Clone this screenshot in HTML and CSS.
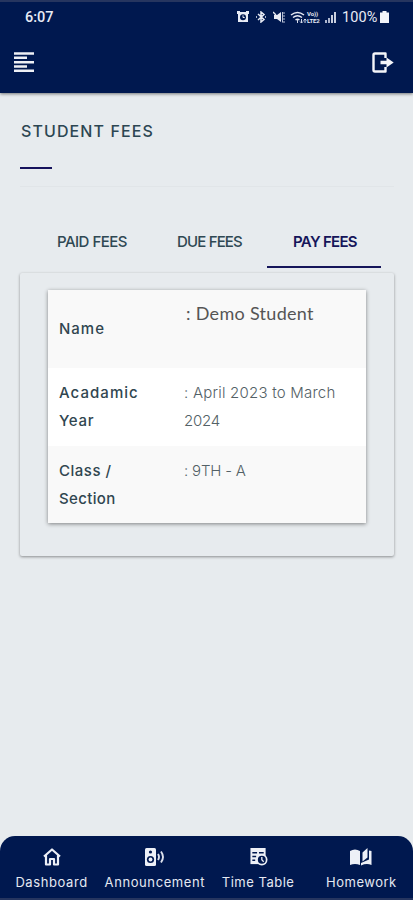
FILE: index.html
```html
<!DOCTYPE html>
<html lang="en">
<head>
<meta charset="utf-8">
<meta name="viewport" content="width=device-width, initial-scale=1">
<title>Student Fees</title>
<link rel="stylesheet" href="styles.css">
</head>
<body>
<div class="app">
  <header class="top">
    <div class="status">
      <span class="clock">6:07</span>
      <div class="indicators">
        <svg width="12" height="12" viewBox="0 0 12 12"><path fill="#e8ebf5" d="M1 1h10v10H1z"/><path fill="#e8ebf5" d="M0 0h3v3H0zM9 0h3v3H9z"/><circle cx="6" cy="6.2" r="3" fill="#00184f"/><path d="M6 4.3v2.2h1.7" stroke="#e8ebf5" fill="none"/></svg>
        <svg class="bt" width="12" height="12" viewBox="0 0 12 12"><path d="M3 3l6 5.5L6 11V1l3 2.5L3 9M1 6h1M10 6h1" stroke="#e8ebf5" stroke-width="1.5" fill="none"/></svg>
        <svg class="mute" width="12" height="12" viewBox="0 0 12 12"><path d="M1 4h3l4-3v10L4 8H1z" fill="#e8ebf5"/><path d="M0 1l3 3" stroke="#e8ebf5" stroke-width="1.500"/><path d="M9.500 1v10" stroke="#b8c0d5"/><path d="M9 2h3M9 5h3M9 8h3M9 11h3" stroke="#b8c0d5"/></svg>
        <svg class="wifi" width="17" height="13" viewBox="0 0 17 13"><path d="M1 4q6.500-5 13 0M3 6.500q4.500-3.500 9 0M5.500 9q2-1.600 4 0" stroke="#e8ebf5" stroke-width="1.500" fill="none"/><path d="M7.500 9v3M11.500 8v4M10 10.500l1.500 1.500 1.500-1.500M15 12V8M13.500 9.500L15 8l1.500 1.500" stroke="#d5daea" fill="none"/></svg>
        <span class="lte"><span>Vo))</span><span>LTE2</span></span>
        <svg class="signal" width="11" height="11" viewBox="0 0 11 11"><path d="M0 8h2v3H0zM3 6h2v5H3z" fill="#aeb7cf"/><path d="M6 3h2v8H6zM9 0h2v11H9z" fill="#c9cfdf"/></svg>
        <span class="percent">100%</span>
        <svg class="battery" width="9" height="12" viewBox="0 0 9 12"><path d="M2.500 0h4v1.500H9V12H0V1.500h2.500z" fill="#f2f4fa"/></svg>
      </div>
    </div>
    <div class="toolbar">
      <svg width="20" height="21" viewBox="0 0 20 21"><path d="M0 1.500h20M0 5.800h13M0 10.200h20M0 14.500h13M0 18.800h20" stroke="#eef0f5" stroke-width="2.600"/></svg>
      <svg width="22" height="21" viewBox="0 0 22 21"><path d="M13.500 6V1.500H3Q1.500 1.500 1.500 3v15q0 1.500 1.500 1.500h10.500V15" stroke="#f4f5f9" stroke-width="2.400" fill="none" stroke-linejoin="round"/><path d="M8.500 8.700h6V5.500l7.200 5-7.200 5v-3.200h-6z" fill="#f4f5f9"/></svg>
    </div>
  </header>

  <main class="content">
    <h1 class="title"><span class="t-title">STUDENT FEES</span></h1>
    <div class="tabs">
      <div class="tab"><span class="t-paid">PAID FEES</span></div>
      <div class="tab due"><span class="t-due">DUE FEES</span></div>
      <div class="tab active"><span class="t-pay">PAY FEES</span></div>
    </div>
    <section class="panel">
      <div class="details">
        <div class="row first"><div class="label"><span class="t-name">Name</span></div><div class="value student"><span>: Demo Student</span></div></div>
        <div class="row white"><div class="label"><span class="t-acad">Acadamic</span><br><span class="t-year">Year</span></div><div class="value"><span class="t-april">: April 2023 to March</span><br><span class="t-2024">2024</span></div></div>
        <div class="row"><div class="label"><span class="t-class">Class /</span><br><span class="t-section">Section</span></div><div class="value"><span class="t-9th">: 9TH - A</span></div></div>
      </div>
    </section>
  </main>

  <nav class="bottom">
    <a class="item"><svg width="18" height="18" viewBox="0 0 18 18"><path d="M1 8.500L9 1.500l8 7M3 7.500V16.500h4V11h4v5.500h4V7.500" fill="none" stroke="#edf0f7" stroke-width="2.200" stroke-linejoin="round"/></svg><span class="n-dash">Dashboard</span></a>
    <a class="item"><svg width="21" height="18" viewBox="0 0 21 18"><rect x="1" y="0" width="11" height="18" rx="1.500" fill="#edf0f7"/><circle cx="6.500" cy="4" r="1.600" fill="#00184f"/><circle cx="6.500" cy="11.500" r="3.600" fill="#00184f"/><circle cx="6.500" cy="11.500" r="1.900" fill="#edf0f7"/><path d="M14 6q2 3 0 6M17 3.500q4 5.500 0 11" fill="none" stroke="#dce1ed" stroke-width="1.900"/></svg><span class="n-ann">Announcement</span></a>
    <a class="item"><svg width="19" height="19" viewBox="0 0 19 19"><path d="M1 0h16v17H1z" fill="#edf0f7"/><path d="M3 5h5M10 5h5M3 9h4M3 13h3" stroke="#00184f" stroke-width="1.600"/><circle cx="13" cy="12.500" r="6" fill="#edf0f7"/><circle cx="13" cy="12.500" r="4.200" fill="#00184f"/><path d="M13 9.500v3l2 2" fill="none" stroke="#edf0f7" stroke-width="1.400"/></svg><span class="n-time">Time Table</span></a>
    <a class="item"><svg width="22" height="18" viewBox="0 0 22 18"><path d="M0 3q5-3 10 0v14q-5-2-10 0zM12.500 4.500L17.500 0v9.500l-5 4zM19 2.500l2.500.5v14q-5-2-10.500.5V15l8-3.500z" fill="#edf0f7"/></svg><span class="n-home">Homework</span></a>
  </nav>
</div>
</body>
</html>
```
FILE: styles.css
```css
* { box-sizing: border-box; }
body { margin: 0; background: #e7ebee; font-family: Inter, "Noto Sans", sans-serif; }
.app { height: 900px; display: flex; flex-direction: column; overflow: hidden; }
.app span { white-space: nowrap; }
svg { display: block; flex: none; }

.top { height: 93px; flex: none; background: #00184f; border-top: 2px solid #26355f; box-shadow: 0 1px 3px rgba(0,0,0,.5); }
.status { height: 30px; padding: 0 24px 0 25px; display: flex; align-items: center; justify-content: space-between; color: #e8ebf5; font-family: Roboto, sans-serif; }
.clock { font-size: 14.5px; font-weight: 500; }
.indicators { display: flex; align-items: center; }
.bt, .mute { margin-left: 6px; }
.wifi { margin-left: 5px; }
.lte { display: flex; flex-direction: column; width: 15px; font-size: 6px; line-height: 7px; font-weight: 700; letter-spacing: -.1px; }
.signal { margin-left: 3px; }
.percent { margin-left: 6px; font-size: 14.5px; width: 36px; letter-spacing: .1px; }
.battery { margin-left: 2px; }
.toolbar { height: 61px; padding: 0 19px 0 14px; display: flex; align-items: center; justify-content: space-between; }

.content { flex: 1; padding: 22px 19px 0 20px; }
.title { height: 72px; margin: 0; border-bottom: 1px solid #e1e5e8; font-size: 16px; line-height: 32px; font-weight: 500; color: #2c4652; }
.title::after { content: ""; display: block; width: 32px; height: 2px; margin-top: 20px; background: #15125c; }
.t-title { display: block; padding-left: 1px; letter-spacing: 1.1px; }

.tabs { display: flex; height: 55px; margin: 26px 13px 0 14px; font-size: 15px; font-weight: 500; line-height: 58px; color: #2f4853; }
.tab { width: 116px; text-align: center; }
.tab.due { width: 117px; padding-left: 2px; }
.tab.active { width: 114px; padding-left: 2px; color: #15155a; font-weight: 600; border-bottom: 2px solid #15155a; }
.t-paid { letter-spacing: -.5px; }
.t-due { letter-spacing: -.85px; }
.t-pay { letter-spacing: -.7px; }

.panel { height: 283px; margin-top: 5px; padding: 17px 28px 0 28px; border-radius: 2px; box-shadow: 0 1px 3px rgba(0,0,0,.4); }
.details { height: 233px; background: #f9f9f9; box-shadow: 0 1px 4px rgba(0,0,0,.45); }
.row { display: flex; height: 78px; padding: 11px 11px 0; font-size: 15px; line-height: 28px; background: #f9f9f9; }
.row.white { background: #fff; }
.row:last-child { height: 77px; }
.label { width: 125px; font-weight: 500; color: #304650; }
.value { color: #536166; font-weight: 300; }
.first .label { padding-top: 14px; }
.student { margin: -2px 0 0 2px; font-family: Lato, sans-serif; font-size: 18px; font-weight: 400; letter-spacing: .3px; color: #555; }
.t-name { letter-spacing: 1px; }
.t-acad { letter-spacing: 1.05px; }
.t-year { letter-spacing: .7px; }
.t-class { letter-spacing: .5px; }
.t-section { letter-spacing: .35px; }
.t-april { letter-spacing: .22px; }
.t-2024 { letter-spacing: -.2px; }
.t-9th { letter-spacing: -.2px; }

.bottom { height: 64px; flex: none; display: grid; grid-template-columns: repeat(4, 1fr); background: #00184f; border-radius: 15px 15px 0 0; border-bottom: 2px solid #26355f; color: #e5e9f2; font-size: 13px; font-weight: 400; line-height: 18px; }
.item { display: flex; flex-direction: column; align-items: center; padding-top: 12px; }
.item svg { height: 18px; }
.item span { margin-top: 7px; }
.n-dash, .n-ann { letter-spacing: .6px; }
.n-time, .n-home { letter-spacing: .5px; }
```
